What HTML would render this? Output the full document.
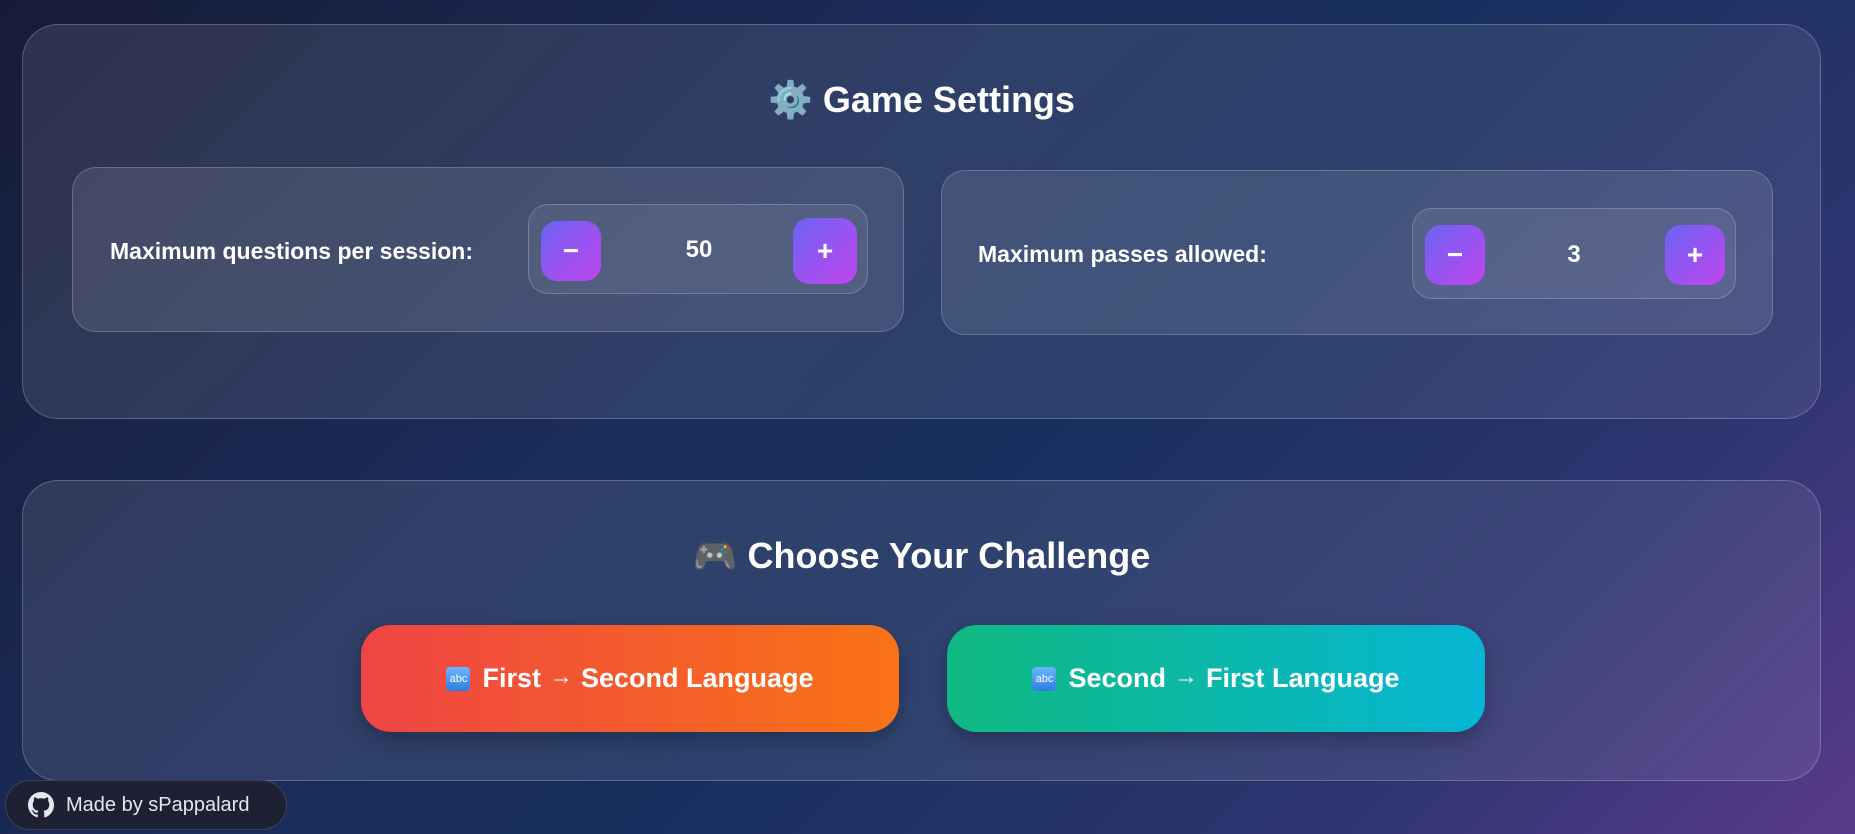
<!DOCTYPE html>
<html><head><meta charset="utf-8"><style>
*{box-sizing:border-box;margin:0;padding:0}
html,body{width:1855px;height:834px;overflow:hidden}
body{font-family:"Liberation Sans",sans-serif;color:#fff;position:relative;
background:linear-gradient(135deg,#161c38 0%,#1b2b58 35%,#18305f 55%,#2d3570 80%,#5a3a8c 100%);}
.card{position:absolute;left:22px;width:1799px;border-radius:36px;border:1px solid rgba(255,255,255,0.22);
background:linear-gradient(135deg,rgba(255,255,255,0.1),rgba(255,255,255,0.08));}
h2{position:absolute;left:0;right:0;text-align:center;font-size:36px;font-weight:700;}
.box{position:absolute;border-radius:24px;border:1px solid rgba(255,255,255,0.2);background:rgba(255,255,255,0.1)}
.lbl{position:absolute;font-size:23px;font-weight:700;}
.step{position:absolute;border-radius:20px;border:1px solid rgba(255,255,255,0.2);background:rgba(255,255,255,0.08)}
.btn{position:absolute;border-radius:16px;background:linear-gradient(135deg,#6c63f5,#c045ec);display:flex;align-items:center;justify-content:center;font-size:28px;font-weight:700}
.val{position:absolute;font-size:24px;font-weight:700;transform:translateX(-50%)}
.big{position:absolute;top:144px;width:538px;height:107px;border-radius:30px;display:flex;align-items:center;justify-content:center;font-size:27px;font-weight:700;box-shadow:0 8px 20px rgba(0,0,0,0.25)}
.abc{display:inline-block;width:24px;height:24px;border-radius:4px;background:linear-gradient(#6bb4ff,#2d7fe0);font-size:11px;line-height:24px;text-align:center;margin-right:12px;font-weight:400}
.ar{font-size:24px;margin:0 8px;position:relative;top:-2px}
</style></head><body>
<div class="card" style="top:24px;height:395px">
<h2 style="top:54px">⚙️ Game Settings</h2>
<div class="box" style="left:49px;top:142px;width:832px;height:165px">
 <div class="lbl" style="left:37px;top:70px">Maximum questions per session:</div>
 <div class="step" style="left:455px;top:36px;width:340px;height:90px">
  <div class="btn" style="left:12px;top:16px;width:60px;height:60px">−</div>
  <div class="val" style="left:170px;top:31px">50</div>
  <div class="btn" style="left:264px;top:13px;width:64px;height:66px">+</div>
 </div>
</div>
<div class="box" style="left:918px;top:145px;width:832px;height:165px">
 <div class="lbl" style="left:36px;top:70px">Maximum passes allowed:</div>
 <div class="step" style="left:470px;top:37px;width:324px;height:91px">
  <div class="btn" style="left:12px;top:16px;width:60px;height:60px">−</div>
  <div class="val" style="left:161px;top:32px">3</div>
  <div class="btn" style="left:252px;top:16px;width:60px;height:60px">+</div>
 </div>
</div>
</div>
<div class="card" style="top:480px;height:301px">
<h2 style="top:54px">🎮 Choose Your Challenge</h2>
<div class="big" style="left:338px;background:linear-gradient(90deg,#ef4444,#f97316)"><span class="abc">abc</span>First<span class="ar">→</span>Second Language</div>
<div class="big" style="left:924px;background:linear-gradient(90deg,#10b981,#06b6d4)"><span class="abc">abc</span>Second<span class="ar">→</span>First Language</div>
</div>
<div style="position:absolute;left:5px;top:780px;width:282px;height:50px;border-radius:25px;background:#1e2034;border:1px solid rgba(255,255,255,0.15);display:flex;align-items:center;padding-left:22px;font-size:20px;color:#e6e6ee">
<svg width="26" height="26" viewBox="0 0 16 16" style="margin-right:12px"><path fill="#e6e6ee" d="M8 0C3.58 0 0 3.58 0 8c0 3.54 2.29 6.53 5.47 7.59.4.07.55-.17.55-.38 0-.19-.01-.82-.01-1.49-2.01.37-2.530-.49-2.69-.94-.09-.23-.48-.94-.82-1.13-.28-.15-.68-.52-.01-.53.63-.01 1.08.58 1.23.82.72 1.21 1.87.87 2.33.66.07-.52.28-.87.51-1.07-1.78-.2-3.64-.89-3.64-3.95 0-.87.31-1.59.82-2.15-.08-.2-.36-1.02.08-2.12 0 0 .67-.21 2.2.82.64-.18 1.32-.27 2-.27.68 0 1.36.09 2 .27 1.53-1.04 2.2-.82 2.2-.82.44 1.1.16 1.92.08 2.12.51.56.82 1.27.82 2.15 0 3.07-1.87 3.75-3.65 3.95.29.25.54.73.54 1.48 0 1.07-.01 1.93-.01 2.2 0 .21.15.46.55.38A8.013 8.013 0 0016 8c0-4.42-3.58-8-8-8z"/></svg>Made by sPappalard</div>
</body></html>
